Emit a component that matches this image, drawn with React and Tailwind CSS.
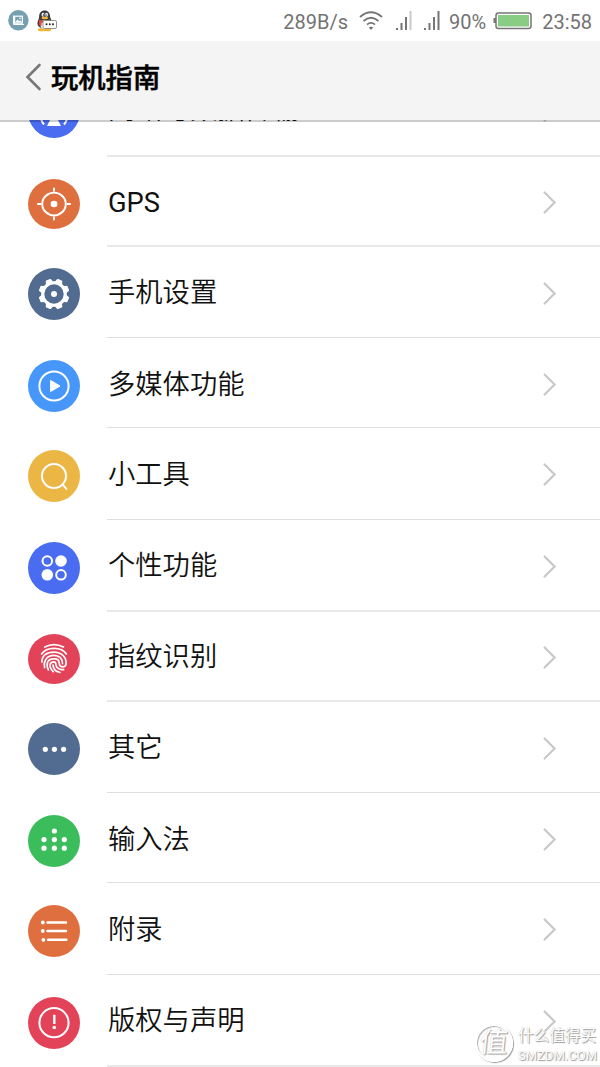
const Disc = ({ color, height = 52, children }) => (
    <svg width="52" height={height} viewBox="0 0 52 52" preserveAspectRatio="none" fill="none" stroke="white" strokeWidth="2" className="shrink-0">
        <circle cx="26" cy="26" r="26" fill={color} stroke="none" />
        {children}
    </svg>
);

const Dots = ({ points, r = 2.6 }) => (
    <g fill="white" stroke="none">
        {points.map(([x, y]) => <circle key={`${x}-${y}`} cx={x} cy={y} r={r} />)}
    </g>
);

const NetworkIcon = () => (
    <Disc color="#4a6cf0">
        <path d="M26 26 L33 40 H19 Z" fill="white" stroke="none" />
        <path d="M16 38.5 Q12 34 12.5 26 M36 38.5 Q40 34 39.5 26" />
    </Disc>
);

const GpsIcon = () => (
    <Disc color="#e06f3f" height={50}>
        <circle cx="26" cy="26" r="11.8" />
        <circle cx="26" cy="26" r="3.4" fill="white" stroke="none" />
        <path d="M26 9.2 V13 M26 39 V42.8 M9.2 26 H13 M39 26 H42.8" />
    </Disc>
);

const GearIcon = () => (
    <Disc color="#526b90">
        <circle cx="26" cy="26" r="11.2" strokeWidth="3" />
        <g fill="white" stroke="none">
            {[22.5, 67.5, 112.5, 157.5, 202.5, 247.5, 292.5, 337.5].map((angle) => (
                <path key={angle} d="M21.4 15 Q22.8 13.6 23 11.6 Q23.2 10.6 24 10.6 H28 Q28.8 10.6 29 11.6 Q29.2 13.6 30.6 15 Z" transform={`rotate(${angle} 26 26)`} />
            ))}
        </g>
        <circle cx="26" cy="26" r="3" fill="white" stroke="none" />
    </Disc>
);

const PlayIcon = () => (
    <Disc color="#4797fa">
        <circle cx="26" cy="26" r="14.6" />
        <path d="M22.6 20.4 L32 26 L22.6 31.6 Z" fill="white" strokeWidth="1" strokeLinejoin="round" />
    </Disc>
);

const SearchIcon = () => (
    <Disc color="#ebb644">
        <circle cx="26" cy="26" r="12" />
        <path d="M34.7 34.7 L38.4 38.8" strokeLinecap="round" />
    </Disc>
);

const PersonalIcon = () => (
    <Disc color="#4a6cf0">
        <circle cx="19.3" cy="19" r="4.8" />
        <circle cx="33" cy="19" r="5.8" fill="white" stroke="none" />
        <circle cx="19.3" cy="32.8" r="5.8" fill="white" stroke="none" />
        <circle cx="33" cy="32.8" r="4.8" />
    </Disc>
);

const FingerprintIcon = () => (
    <Disc color="#e34359" height={50}>
        <g strokeWidth="1.7" strokeLinecap="round">
            <path d="M16.8 13.6 Q26 8.6 35.4 13.6" />
            <path d="M13.6 20.8 C18.5 13 33.5 13 38.4 20.8" />
            <path d="M14 29.2 C13.6 22.6 18.8 18.8 25.8 18.8 C33.5 18.8 38.8 24 38 31.4 C37.4 35.4 31.4 35 31.3 30.6 C31.2 27.4 29.4 25.8 26.6 25.8" />
            <path d="M16.6 35 C15.2 27.2 19.4 22.2 25.8 22.2 C31.4 22.2 34.6 25.6 34.5 30.8" />
            <path d="M20.4 37.4 C17.8 31.6 19 25.8 25.6 25.8" />
            <path d="M25.2 39.2 C20.4 34 21.4 29 26 29 C28.6 29.2 27.4 32 28.6 34 C30 36.6 32.6 37.4 35.6 37" />
            <path d="M32 40 C28 39.2 25.2 36.4 25 32.4" />
        </g>
    </Disc>
);

const OtherIcon = () => (
    <Disc color="#526b90">
        <Dots points={[[17.3, 26.3], [26.4, 26.3], [35.6, 26.3]]} />
    </Disc>
);

const InputIcon = () => (
    <Disc color="#3bbd5b">
        <Dots points={[[26.4, 16], [16, 24.6], [26.4, 24.6], [36.3, 24.6], [16, 33.2], [26.4, 33.2], [36.3, 33.2]]} />
    </Disc>
);

const AppendixIcon = () => (
    <Disc color="#e06f3f">
        <Dots points={[[14.8, 17.5], [14.8, 26], [15.4, 34.8]]} r={1.9} />
        <path d="M19.5 17.5 H38 M19.5 26 H38 M20 34.8 H38.4" strokeWidth="2.4" strokeLinecap="round" />
    </Disc>
);

const NoticeIcon = () => (
    <Disc color="#e34359">
        <circle cx="26" cy="25.7" r="14.6" />
        <path d="M26.3 17.8 V27" strokeWidth="2.4" />
        <circle cx="26.3" cy="30.5" r="1.8" fill="white" stroke="none" />
    </Disc>
);

const Chevron = () => (
    <svg width="14" height="24" viewBox="0 0 14 24" fill="none" stroke="#c8c8c8" strokeWidth="2.2" strokeLinecap="round" className="shrink-0">
        <path d="M1.6 1.5 L11.6 11.5 L1.6 21.5" />
    </svg>
);

const THICK = 'border-b-2 border-[#e9e9e9]';
const THIN = 'border-b border-[#dfdfdf]';

const items = [
    { label: '网络与数据传输', Icon: NetworkIcon, row: 'h-[91px]', line: THICK, pad: 'pt-0' },
    { label: 'GPS', Icon: GpsIcon, row: 'h-[90px]', line: THICK, pad: 'pt-[3px]' },
    { label: '手机设置', Icon: GearIcon, row: 'h-[91px]', line: THIN, pad: 'pt-[3px]' },
    { label: '多媒体功能', Icon: PlayIcon, row: 'h-[90px]', line: THIN, pad: 'pt-[5px]' },
    { label: '小工具', Icon: SearchIcon, row: 'h-[92px]', line: THIN, pad: 'pt-[3px]' },
    { label: '个性功能', Icon: PersonalIcon, row: 'h-[92px]', line: THICK, pad: 'pt-[3px]' },
    { label: '指纹识别', Icon: FingerprintIcon, row: 'h-[90px]', line: THICK, pad: 'pt-[3px]' },
    { label: '其它', Icon: OtherIcon, row: 'h-[91px]', line: THIN, pad: 'pt-[3px]' },
    { label: '输入法', Icon: InputIcon, row: 'h-[90px]', line: THIN, pad: 'pt-[5px]' },
    { label: '附录', Icon: AppendixIcon, row: 'h-[92px]', line: THIN, pad: 'pt-[3px]' },
    { label: '版权与声明', Icon: NoticeIcon, row: 'h-[92px]', line: THICK, pad: 'pt-[3px]' },
];

const Signal = ({ weak }) => (
    <svg width="18" height="20" viewBox="0 0 18 20" fill="#757575">
        <rect x="1" y="17" width="2" height="2" />
        <rect x="5.5" y="12" width="2" height="7" />
        <rect x="10" y="6" width="2" height="13" />
        <rect x="14.5" y="0" width="2" height="19" fill={weak ? '#c9c9c9' : '#757575'} />
    </svg>
);

const StatusBar = () => (
    <div className="flex h-[41px] shrink-0 items-center bg-white px-2 text-[20px] text-[#737373]">
        <svg width="21" height="21" viewBox="0 0 21 21" fill="none">
            <circle cx="10.4" cy="10.3" r="10.2" fill="#75a0b2" />
            <rect x="6.6" y="6.2" width="7.8" height="7" stroke="white" strokeWidth="1.2" />
            <path d="M5.5 5.5 V14.5 H16" stroke="white" strokeWidth="1" />
            <path d="M7 12.5 L9.5 9.5 L11.3 11.3 L12.5 10.3 L14 12.5 Z" fill="white" />
            <circle cx="12" cy="8.4" r=".8" fill="white" />
        </svg>
        <svg width="22" height="22" viewBox="0 0 22 22" className="ml-[7px]">
            <ellipse cx="5.5" cy="19.7" rx="3.6" ry="1.6" fill="#f2b431" />
            <ellipse cx="11.5" cy="19.7" rx="3.6" ry="1.6" fill="#f2b431" />
            <path d="M3.2 6 C3.2 -1.5 14 -1.5 14 6 C14 8 16 10 16 13 C16 20 2.2 20 1.5 14 C1.2 11 3.2 9 3.2 6" fill="#3c3b42" />
            <ellipse cx="8.5" cy="14.5" rx="4.2" ry="4.5" fill="white" />
            <ellipse cx="7" cy="4.8" rx="1.4" ry="2" fill="white" />
            <ellipse cx="10.5" cy="4.8" rx="1.4" ry="2" fill="white" />
            <circle cx="7.4" cy="5" r=".7" fill="#222" />
            <circle cx="10.1" cy="5" r=".7" fill="#222" />
            <ellipse cx="8.8" cy="8" rx="3.3" ry="1.2" fill="#f2b431" />
            <path d="M3 9.5 Q8.5 12 14 9.5 L14 11.5 Q8.5 13.5 5.8 12.5 L5.5 16 L3.2 15.5 Z" fill="#e34b41" />
            <rect x="7" y="10.5" width="13.5" height="8" rx="1.3" fill="white" stroke="#777" strokeWidth=".8" />
            <g fill="#222"><circle cx="10.5" cy="14.3" r="1" /><circle cx="13.8" cy="14.3" r="1" /><circle cx="17" cy="14.3" r="1" /></g>
        </svg>
        <div className="ml-auto flex items-center">
            <span className="pt-[3px]">289B/s</span>
            <svg width="24" height="20" viewBox="0 0 24 20" fill="none" stroke="#757575" strokeWidth="1.8" className="ml-[11px]">
                <path d="M1 6 Q12 -3.5 23 6 M4.5 10 Q12 3.5 19.5 10 M8 13.6 Q12 10.2 16 13.6" />
                <path d="M9.8 16.5 Q12 15 14.2 16.5 L12 19 Z" fill="#757575" stroke="none" />
            </svg>
            <span className="ml-3"><Signal weak /></span>
            <span className="ml-[10px]"><Signal /></span>
            <span className="ml-2 pt-[3px]">90%</span>
            <svg width="40" height="18" viewBox="0 0 40 18" className="ml-[7px] mr-px">
                <rect x="0.5" y="6" width="3" height="5" fill="#757575" />
                <rect x="3" y="1" width="35" height="15.5" rx="2.5" fill="white" stroke="#757575" strokeWidth="1.5" />
                <rect x="5" y="3" width="31" height="11.5" fill="#88cd83" />
            </svg>
            <span className="ml-2 pt-[3px]">23:58</span>
        </div>
    </div>
);

const Watermark = () => (
    <div className="absolute bottom-0 right-0 flex h-[48px] items-center gap-[5px] text-white [text-shadow:1px_1px_1px_#999,0_0_1px_#bbb]">
        <div className="flex h-[38px] w-[38px] items-center justify-center rounded-full border-2 border-white text-[28px] shadow-[1px_1px_1px_#999,inset_1px_1px_1px_#aaa]">
            <span className="-skew-x-6">值</span>
        </div>
        <div className="flex w-[82px] flex-col whitespace-nowrap pt-[3px]">
            <span className="text-[15.6px] leading-[22px]">什么值得买</span>
            <span className="text-[13px] leading-[18px]">SMZDM.COM</span>
        </div>
    </div>
);

const App = () => {
    return (
        <div className="relative flex h-[1067px] w-[600px] flex-col overflow-hidden bg-white font-[Roboto,'Noto_Sans_CJK_SC',sans-serif]">
            <StatusBar />
            {/* The bottom line is see-through and lies over the scrolled list */}
            <header className="relative z-10 -mb-0.5 flex h-[81px] shrink-0 items-center border-b-2 border-black/20 bg-[#f4f4f4] bg-clip-padding pl-[25px]">
                <svg width="17" height="28" viewBox="0 0 17 28" fill="none" stroke="#777777" strokeWidth="2.6" strokeLinecap="round" className="-mt-2">
                    <path d="M14.5 2 L2.5 14 L14.5 26" />
                </svg>
                <h1 className="-mt-0.5 ml-[9px] text-[27.3px] font-medium text-black [-webkit-text-stroke:0.5px_black]">玩机指南</h1>
            </header>
            <main className="flex min-h-0 flex-1 flex-col justify-end overflow-hidden">
                {items.map(({ label, Icon, row, line, pad }) => (
                    <div key={label} className={`flex shrink-0 pl-7 ${row}`}>
                        <div className={`flex w-[79px] shrink-0 items-center ${pad}`}>
                            <Icon />
                        </div>
                        <div className={`flex flex-1 items-center justify-between pr-[43px] ${line} ${pad}`}>
                            <span className={`pl-px text-[27.3px] text-[#111111] ${label === 'GPS' ? 'pt-px font-normal' : 'font-[350]'}`}>{label}</span>
                            <Chevron />
                        </div>
                    </div>
                ))}
            </main>
            <Watermark />
        </div>
    );
};

export default App;
